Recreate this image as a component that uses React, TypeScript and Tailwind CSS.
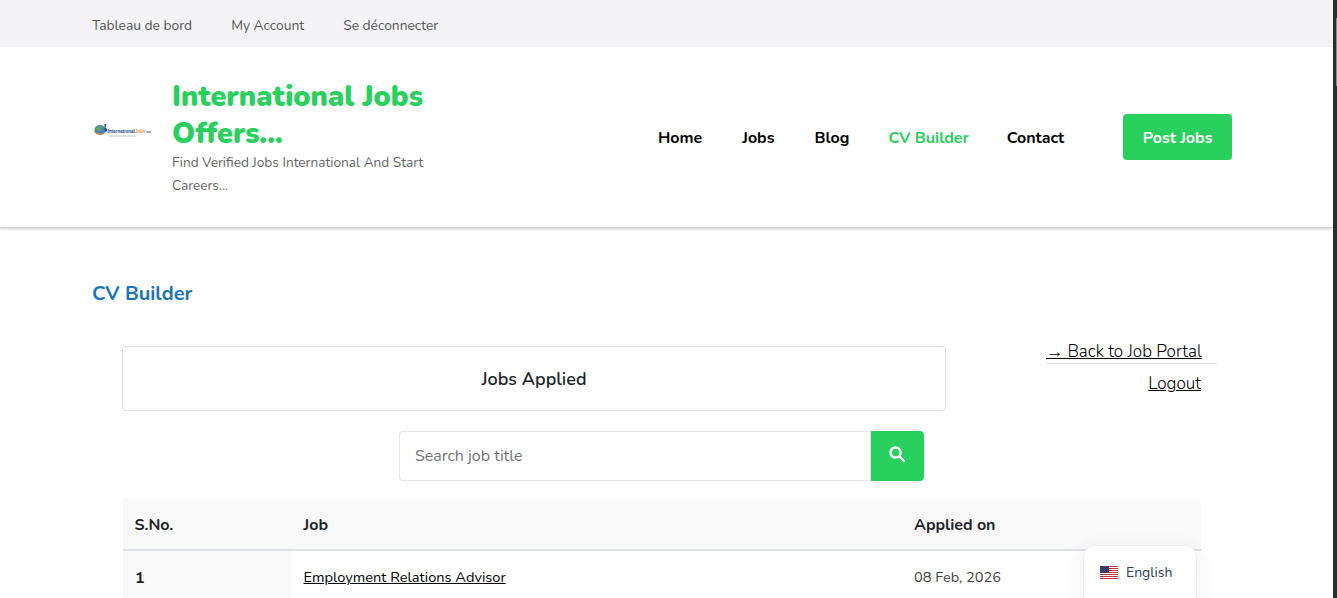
import React from "react";

function Logo() {
  return (
    <svg width="60" height="20" viewBox="0 0 60 20" className="block">
      <ellipse cx="8" cy="8" rx="5.500" ry="5" fill="#3b86bd" />
      <path d="M3.500 7c2-3 5-4 7-3l-1.500 4-3 1z" fill="#6aa84f" />
      <path d="M1 8c2 5 9 6 13 3-4 1-9 1-13-3z" fill="#e8892b" />
      <path d="M12.500 2l2 .5-1 3 2 2.500-2 2.500-.8-3.500z" fill="#1c3f7a" />
      <text x="15.500" y="11" fontSize="6" fontWeight="700" fontFamily="Liberation Sans, sans-serif" textLength="38" lengthAdjust="spacingAndGlyphs" fill="#1f3f80">International<tspan fill="#e8892b">Jobs</tspan></text>
      <rect x="54.500" y="9" width="4.500" height="2" fill="#27407f" opacity="0.45" />
      <rect x="17" y="13.500" width="27" height="1" fill="#8a8f99" opacity="0.55" />
    </svg>
  );
}

function Flag() {
  return (
    <svg width="18" height="13" viewBox="0 0 18 13" className="block">
      <rect width="18" height="13" fill="#fff" />
      {[0, 2, 4, 6, 8, 10, 12].map((y) => (
        <rect key={y} y={y} width="18" height="1" fill="#c8313e" />
      ))}
      <rect width="9" height="7" fill="#3c3b6e" />
    </svg>
  );
}

export default function App() {
  return (
    <div className="relative h-[598px] overflow-hidden bg-white pr-[4px] font-['Nunito','Noto_Sans',sans-serif] text-[#212529]">
      <div className="absolute right-0 top-0 z-10 h-full w-[4px] bg-[#2b2b2b]">
        <div className="ml-[3px] mt-[18px] h-[68px] w-[1px] bg-[#8a8a8a]" />
      </div>

      <div className="flex h-[47px] items-center gap-[39px] bg-[#f4f4f6] pl-[92px] pt-[6px] text-[13.800px] text-[#555]">
        <span>Tableau de bord</span>
        <span>My Account</span>
        <span>Se déconnecter</span>
      </div>

      <header className="flex h-[180px] items-center bg-white pl-[92px] pr-[101px] shadow-[0_2px_3px_rgba(0,0,0,0.2)]">
        <div className="mb-[10px] w-[60px]">
          <Logo />
        </div>
        <div className="ml-[20px] w-[270px]">
          <div className="mb-[-1px] mt-[1px] text-[28.700px] font-black leading-[37px] text-[#2ad05d]">International Jobs Offers...</div>
          <div className="text-[13.650px] leading-[23px] text-[#666]">Find Verified Jobs International And Start Careers...</div>
        </div>
        <nav className="ml-auto flex items-center gap-[39px] text-[16px] font-bold text-black">
          <span className="mr-[1px] pt-[2px]">Home</span>
          <span className="mr-[1px] pt-[2px]">Jobs</span>
          <span className="pt-[2px]">Blog</span>
          <span className="mr-[-1px] pt-[2px] text-[#2ad05d]">CV Builder</span>
          <span className="mr-[1px] pt-[2px]">Contact</span>
          <button className="ml-[19px] h-[46px] rounded-[4px] bg-[#2ad05d] px-[19.500px] pt-[2px] text-[16px] font-bold text-white">Post Jobs</button>
        </nav>
      </header>

      <main className="pl-[92px]">
        <h1 className="pt-[53px] text-[20px] font-bold leading-[27px] text-[#1b75bb]">CV Builder</h1>

        <div className="mt-[39px] flex items-start pl-[30px]">
          <div className="flex h-[65px] w-[824px] items-center justify-center rounded-[4px] border border-[#dcdfe3] pt-[2px] text-[18px] font-semibold text-[#212529]">
            Jobs Applied
          </div>
          <div className="ml-[100px] w-[171px] text-right text-[17.100px] font-light text-black">
            <div className="whitespace-nowrap border-b border-[#e3e3e3] pb-[6px] pr-[17px] leading-[11px]">
              <a className="underline">→ Back to Job Portal</a>
            </div>
            <div className="mt-[7px] pr-[16px] leading-[25px]">
              <a className="underline">Logout</a>
            </div>
          </div>
        </div>

        <div className="ml-[307px] mt-[20px] flex h-[50px]">
          <div className="flex w-[472px] items-center rounded-l-[4px] border border-[#e3e5e8] pl-[15px] text-[16px] text-[#757575]">Search job title</div>
          <button className="flex w-[53px] items-center justify-center rounded-r-[4px] bg-[#2ad05d] pb-[4px] pr-[2px] text-white">
            <svg width="16" height="16" viewBox="0 0 16 16" fill="none" stroke="currentColor" strokeWidth="2.400" strokeLinecap="round">
              <circle cx="6.500" cy="6.500" r="5" />
              <path d="M10.500 10.500L15 15" />
            </svg>
          </button>
        </div>

        <div className="ml-[31px] mt-[17px] w-[1078px] overflow-hidden rounded-t-[4px]">
          <div className="flex h-[53px] items-center border-b-2 border-[#dee2e6] bg-[#f9f9f9] pt-[2px] text-[16px] font-bold text-[#212529]">
            <div className="w-[168px] pl-[11.500px]">S.No.</div>
            <div className="w-[612px] pl-[12.500px]">Job</div>
            <div className="pl-[11px]">Applied on</div>
          </div>
          <div className="flex h-[60px] text-[14.600px]">
            <div className="w-[168px] bg-[#f9f9f9] pl-[12px] pt-[15px] text-[16px] font-bold">1</div>
            <div className="w-[612px] pl-[12.500px] pt-[16px] text-black"><a className="underline">Employment Relations Advisor</a></div>
            <div className="pl-[11px] pt-[16px] text-[#444]">08 Feb, 2026</div>
          </div>
        </div>
      </main>

      <div className="absolute left-[1083px] top-[545px] flex h-[70px] w-[114px] items-start gap-[8px] rounded-[12px] border border-[#eceef0] bg-white pl-[16px] pt-[16px] text-[14px] text-[#2c3e50] shadow-[0_4px_20px_rgba(0,0,0,0.08)]">
        <div className="mt-[4px]"><Flag /></div>
        <span>English</span>
      </div>
    </div>
  );
}
